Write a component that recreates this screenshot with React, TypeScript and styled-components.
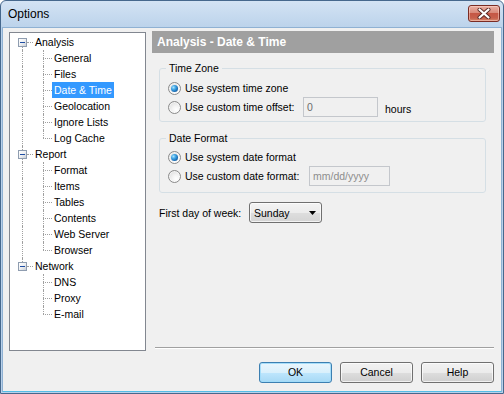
import React from "react";
import styled, { createGlobalStyle } from "styled-components";

const GlobalStyle = createGlobalStyle`
  html, body { margin: 0; padding: 0; background: #ffffff; }
  body { font-family: "Liberation Sans", Arial, sans-serif; font-size: 10.5px; color: #000; }
  * { box-sizing: border-box; }
`;

const Window = styled.div`
  width: 504px;
  height: 394px;
  display: flex;
  flex-direction: column;
  border: 1px solid #46688d;
  border-radius: 6px 6px 0 0;
  background: linear-gradient(#d3e3f4 0px, #bcd3eb 26px, #b9d1ea 27px, #b9d1ea 100%);
  overflow: hidden;
`;

const TitleBar = styled.div`
  height: 26px;
  flex: none;
  display: flex;
  align-items: flex-start;
  justify-content: space-between;
  padding: 0 3px 0 7px;
`;

const TitleText = styled.span`
  font-size: 12px;
  line-height: 26px;
  color: #000;
`;

const CloseButton = styled.div`
  margin-top: 4px;
  width: 32px;
  height: 17px;
  border: 1px solid #7a2c24;
  border-radius: 3px;
  background: linear-gradient(#eab0a4 0%, #d98a7a 45%, #c55745 50%, #c7604c 80%, #d88a6e 100%);
  box-shadow: inset 0 0 0 1px rgba(255, 220, 210, 0.5);
  display: flex;
  align-items: center;
  justify-content: center;
`;

const Body = styled.div`
  flex: 1;
  margin: 0 1px 1px 1px;
  border: 1px solid #8fb1d3;
  border-bottom-color: #54bde6;
  background: #f0f0f0;
  display: flex;
  flex-direction: column;
  padding: 3px 7px 8px 6px;
`;

const MainRow = styled.div`
  display: flex;
  height: 320px;
`;

const TreeBox = styled.div`
  width: 137px;
  height: 319px;
  margin-top: 1px;
  border: 1px solid #828790;
  background: #fff;
  padding-top: 1px;
  flex: none;
`;

const TreeRow = styled.div`
  display: flex;
  height: 16px;
`;

const Gutter = styled.span<{ $width: number; $lineX: number; $up: boolean; $down: boolean; $branch: number }>`
  position: relative;
  flex: none;
  width: ${(p) => p.$width}px;
  height: 16px;
  &::before {
    content: "";
    display: ${(p) => (p.$up || p.$down ? "block" : "none")};
    position: absolute;
    left: ${(p) => p.$lineX}px;
    top: ${(p) => (p.$up ? "0" : "8px")};
    bottom: ${(p) => (p.$down ? "0" : "8px")};
    border-left: 1px dotted #a0a0a0;
  }
  &::after {
    content: "";
    display: ${(p) => (p.$branch > 0 ? "block" : "none")};
    position: absolute;
    left: ${(p) => p.$width - p.$branch}px;
    width: ${(p) => p.$branch}px;
    top: 8px;
    border-top: 1px dotted #a0a0a0;
  }
`;

const Expander = styled.span`
  position: absolute;
  left: 8px;
  top: 4px;
  width: 9px;
  height: 9px;
  border: 1px solid #8f9db0;
  background: linear-gradient(135deg, #ffffff 0%, #eef0f2 50%, #c9ced6 100%);
  z-index: 1;
  &::after {
    content: "";
    position: absolute;
    left: 1px;
    top: 3px;
    width: 5px;
    height: 1px;
    background: #1f4ea3;
  }
`;

const TreeLabel = styled.span<{ $selected?: boolean }>`
  height: 16px;
  line-height: 16px;
  padding: 0 2px;
  white-space: nowrap;
  background: ${(p) => (p.$selected ? "#3399ff" : "transparent")};
  color: ${(p) => (p.$selected ? "#ffffff" : "#000000")};
`;

const RightPane = styled.div`
  flex: 1;
  margin-left: 6px;
  display: flex;
  flex-direction: column;
`;

const PaneHeader = styled.div`
  height: 22px;
  flex: none;
  background: #a0a0a0;
  color: #ffffff;
  font-weight: bold;
  font-size: 12px;
  line-height: 22px;
  padding-left: 5px;
`;

const PaneContent = styled.div`
  flex: 1;
  display: flex;
  flex-direction: column;
  padding: 8px 8px 0 7px;
`;

const Group = styled.fieldset<{ $top: number; $padTop: number; $padBottom: number }>`
  margin: ${(p) => p.$top}px 0 0 0;
  min-width: 0;
  border: 1px solid #d5dfe5;
  border-radius: 3px;
  padding: ${(p) => p.$padTop}px 8px ${(p) => p.$padBottom}px 8px;
  display: flex;
  flex-direction: column;
`;

const GroupLegend = styled.legend`
  padding: 0 3px;
  margin-left: -2px;
  line-height: 14px;
  font-size: 10.5px;
`;

const OptionRow = styled.div<{ $h: number }>`
  height: ${(p) => p.$h}px;
  display: flex;
  align-items: center;
`;

const RadioLabel = styled.label<{ $width?: number }>`
  display: flex;
  align-items: center;
  gap: 4px;
  flex: none;
  width: ${(p) => (p.$width ? `${p.$width}px` : "auto")};
  white-space: nowrap;
`;

const Radio = styled.span<{ $checked: boolean }>`
  position: relative;
  width: 13px;
  height: 13px;
  flex: none;
  border-radius: 50%;
  border: 1px solid #8a8a8a;
  background: radial-gradient(circle at 65% 70%, #ffffff 0%, #f4f4f4 35%, #d6d6d6 100%);
  box-shadow: inset 0 0 0 1px rgba(255, 255, 255, 0.6);
  &::after {
    content: "";
    display: ${(p) => (p.$checked ? "block" : "none")};
    position: absolute;
    left: 2px;
    top: 2px;
    width: 7px;
    height: 7px;
    border-radius: 50%;
    background: radial-gradient(circle at 35% 35%, #a9e4fd 0%, #3fa3e3 35%, #1768b0 70%, #0d3f78 100%);
  }
`;

const TextField = styled.div<{ $width: number; $placeholder?: boolean }>`
  width: ${(p) => p.$width}px;
  height: 20px;
  flex: none;
  border: 1px solid #abadb3;
  border-color: #abadb3 #dbdfe6 #e3e9ef #e2e3ea;
  background: #f0f0f0;
  padding-left: 3px;
  line-height: 18px;
  color: ${(p) => (p.$placeholder ? "#8d8d8d" : "#6d6d6d")};
  box-shadow: inset 0 0 0 0 transparent;
  outline: 1px solid #c4c7cc;
  outline-offset: -1px;
`;

const Suffix = styled.span`
  margin-left: 7px;
  margin-top: 4px;
`;

const FieldRow = styled.div`
  margin-top: 9px;
  display: flex;
  align-items: center;
  height: 21px;
`;

const FieldLabel = styled.span`
  width: 90px;
  flex: none;
  white-space: nowrap;
`;

const SelectBox = styled.div`
  width: 73px;
  height: 21px;
  border: 1px solid #707070;
  border-radius: 3px;
  background: linear-gradient(#f4f4f4 0%, #ececec 50%, #dedede 51%, #d4d4d4 100%);
  box-shadow: inset 0 0 0 1px rgba(255, 255, 255, 0.7);
  display: flex;
  align-items: center;
  justify-content: space-between;
  padding: 0 5px 0 4px;
`;

const Spacer = styled.div`
  flex: 1;
`;

const Separator = styled.div`
  height: 2px;
  margin: 0 0 2px 3px;
  border-top: 1px solid #a0a0a0;
  border-bottom: 1px solid #ffffff;
`;

const ButtonRow = styled.div`
  margin-top: 11px;
  display: flex;
  justify-content: flex-end;
  gap: 8px;
`;

const DialogButton = styled.div<{ $default?: boolean }>`
  width: 73px;
  height: 21px;
  border: 1px solid ${(p) => (p.$default ? "#3c7fb1" : "#707070")};
  border-radius: 3px;
  background: ${(p) =>
    p.$default
      ? "linear-gradient(#eaf6fd 0%, #d9f0fc 50%, #bee6fd 51%, #a7d9f5 100%)"
      : "linear-gradient(#f2f2f2 0%, #ebebeb 50%, #dddddd 51%, #cfcfcf 100%)"};
  box-shadow: inset 0 0 0 1px ${(p) => (p.$default ? "rgba(160, 220, 250, 0.9)" : "rgba(255,255,255,0.7)")};
  display: flex;
  align-items: center;
  justify-content: center;
  line-height: 19px;
`;

type TreeNode = { label: string; selected?: boolean; children: { label: string; selected?: boolean }[] };

const tree: TreeNode[] = [
  {
    label: "Analysis",
    children: [
      { label: "General" },
      { label: "Files" },
      { label: "Date & Time", selected: true },
      { label: "Geolocation" },
      { label: "Ignore Lists" },
      { label: "Log Cache" },
    ],
  },
  {
    label: "Report",
    children: [
      { label: "Format" },
      { label: "Items" },
      { label: "Tables" },
      { label: "Contents" },
      { label: "Web Server" },
      { label: "Browser" },
    ],
  },
  {
    label: "Network",
    children: [{ label: "DNS" }, { label: "Proxy" }, { label: "E-mail" }],
  },
];

function Tree() {
  const rows: React.ReactNode[] = [];
  tree.forEach((node, i) => {
    const first = i === 0;
    const last = i === tree.length - 1;
    rows.push(
      <TreeRow key={node.label}>
        <Gutter $width={23} $lineX={12} $up={!first} $down={!last} $branch={6}>
          <Expander />
        </Gutter>
        <TreeLabel $selected={node.selected}>{node.label}</TreeLabel>
      </TreeRow>
    );
    node.children.forEach((child, j) => {
      const lastChild = j === node.children.length - 1;
      rows.push(
        <TreeRow key={node.label + child.label}>
          <Gutter $width={23} $lineX={12} $up={!last} $down={!last} $branch={0} />
          <Gutter $width={19} $lineX={10} $up={true} $down={!lastChild} $branch={9} />
          <TreeLabel $selected={child.selected}>{child.label}</TreeLabel>
        </TreeRow>
      );
    });
  });
  return <TreeBox>{rows}</TreeBox>;
}

export default function App() {
  return (
    <>
      <GlobalStyle />
      <Window>
        <TitleBar>
          <TitleText>Options</TitleText>
          <CloseButton>
            <svg width="14" height="11" viewBox="0 0 14 11">
              <path d="M2.5 1.5 L11.5 9.5 M11.5 1.5 L2.5 9.5" stroke="#5a2a26" strokeWidth="4" strokeLinecap="round" />
              <path d="M2.5 1.5 L11.5 9.5 M11.5 1.5 L2.5 9.5" stroke="#ffffff" strokeWidth="2.2" strokeLinecap="round" />
            </svg>
          </CloseButton>
        </TitleBar>
        <Body>
          <MainRow>
            <Tree />
            <RightPane>
              <PaneHeader>Analysis - Date &amp; Time</PaneHeader>
              <PaneContent>
                <Group $top={0} $padTop={4} $padBottom={4}>
                  <GroupLegend>Time Zone</GroupLegend>
                  <OptionRow $h={18}>
                    <RadioLabel>
                      <Radio $checked={true} />
                      Use system time zone
                    </RadioLabel>
                  </OptionRow>
                  <OptionRow $h={20}>
                    <RadioLabel $width={135}>
                      <Radio $checked={false} />
                      Use custom time offset:
                    </RadioLabel>
                    <TextField $width={75}>0</TextField>
                    <Suffix>hours</Suffix>
                  </OptionRow>
                </Group>
                <Group $top={9} $padTop={3} $padBottom={6}>
                  <GroupLegend>Date Format</GroupLegend>
                  <OptionRow $h={18}>
                    <RadioLabel>
                      <Radio $checked={true} />
                      Use system date format
                    </RadioLabel>
                  </OptionRow>
                  <OptionRow $h={20}>
                    <RadioLabel $width={141}>
                      <Radio $checked={false} />
                      Use custom date format:
                    </RadioLabel>
                    <TextField $width={81} $placeholder>
                      mm/dd/yyyy
                    </TextField>
                  </OptionRow>
                </Group>
                <FieldRow>
                  <FieldLabel>First day of week:</FieldLabel>
                  <SelectBox>
                    <span>Sunday</span>
                    <svg width="7" height="4" viewBox="0 0 7 4">
                      <polygon points="0,0 7,0 3.5,4" fill="#000" />
                    </svg>
                  </SelectBox>
                </FieldRow>
                <Spacer />
              </PaneContent>
              <Separator />
            </RightPane>
          </MainRow>
          <ButtonRow>
            <DialogButton $default>OK</DialogButton>
            <DialogButton>Cancel</DialogButton>
            <DialogButton>Help</DialogButton>
          </ButtonRow>
        </Body>
      </Window>
    </>
  );
}
